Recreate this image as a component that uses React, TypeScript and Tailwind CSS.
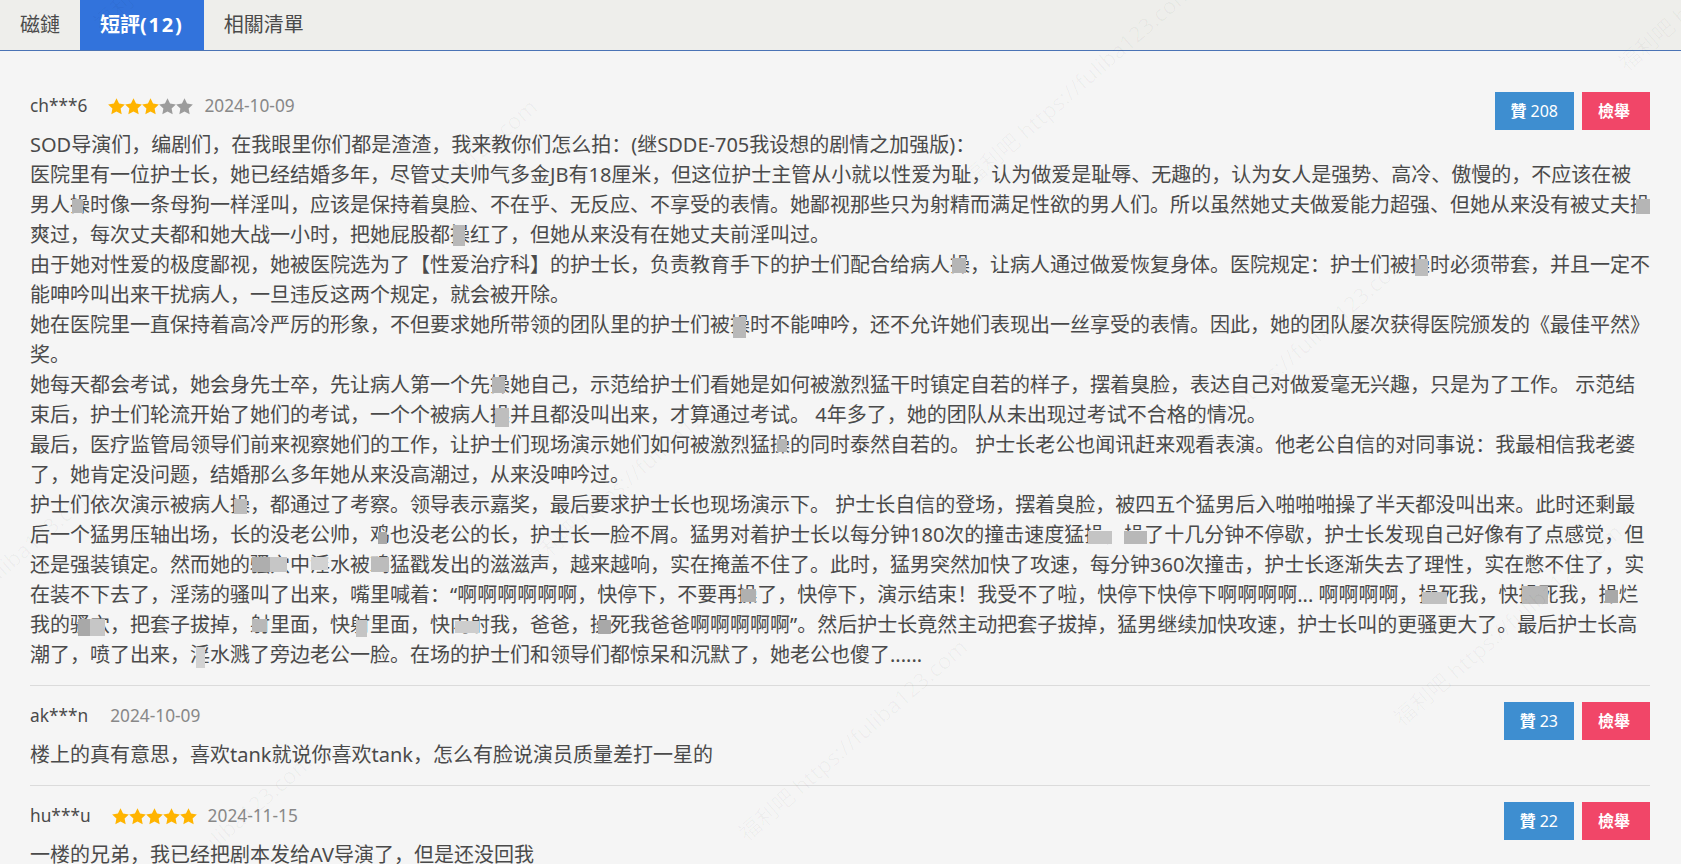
import type { ReactNode } from "react";

// lower-left corner of each watermark
const marks = [
  { x: 106, y: 37 },
  { x: 321, y: 307 },
  { x: 536, y: 577 },
  { x: 751, y: 847 },
  { x: 761, y: -78 },
  { x: 976, y: 192 },
  { x: 1191, y: 462 },
  { x: 1406, y: 732 },
  { x: 1631, y: 77 },
  { x: -119, y: 692 },
  { x: 96, y: 962 },
];

const Mask = ({ children, cls }: { children: ReactNode; cls: string }) => (
  <span className="relative">
    {children}
    <span className={`absolute ${cls}`} />
  </span>
);

const Star = ({ on }: { on: boolean }) => (
  <svg viewBox="0 0 24 24" className={`h-[17px] w-[17px] ${on ? "fill-[#ffb400]" : "fill-[#9c9c9c]"}`}>
    <path d="M12 .5l3.6 7.4 8.2 1.1-6 5.7 1.5 8.1-7.3-3.9-7.3 3.9 1.5-8.1-6-5.7 8.2-1.1z" />
  </svg>
);

const Review = ({
  name,
  date,
  stars,
  likes,
  children,
  last,
}: {
  name: string;
  date: string;
  stars?: number;
  likes: number;
  children: ReactNode;
  last?: boolean;
}) => (
  <div className={`pt-4 pb-[15px] ${last ? "" : "border-b border-[#dbdbdb]"}`}>
    <div className="flex h-[38px] justify-between">
      <div className="flex h-7 items-center text-[17.3px]">
        <span>{name}</span>
        {stars !== undefined && (
          <span className="ml-[21px] flex">
            {[1, 2, 3, 4, 5].map((n) => (
              <Star key={n} on={n <= stars} />
            ))}
          </span>
        )}
        <span className={`text-[#888888] ${stars !== undefined ? "ml-[11px]" : "ml-[22px]"}`}>{date}</span>
      </div>
      <div className="flex gap-2 text-[16px] text-white">
        <button className="flex h-[38px] items-center bg-[#3e8ed0] px-4">
          <b>贊</b>
          <span className="ml-1">{likes}</span>
        </button>
        <button className="h-[38px] bg-[#f14668] pr-5 pl-4 font-bold">檢舉</button>
      </div>
    </div>
    <div className="text-[20px] leading-[30px]">{children}</div>
  </div>
);

export default function App() {
  return (
    <div className="relative h-[864px] overflow-hidden bg-[#f5f5f5] font-['Noto_Sans','Noto_Sans_CJK_SC',sans-serif] text-[#4a4a4a]">
      <div className="flex h-[51px] border-b border-[#4a73b5] bg-[#eeeeeb] text-[20px] leading-[50px]">
        <div className="px-5">磁鏈</div>
        <div className="bg-[#3273dc] px-5 font-bold text-white">
          短評<span className="tracking-[1.8px]">(12)</span>
        </div>
        <div className="px-5">相關清單</div>
      </div>

      <div className="pt-[25px] pr-[31px] pl-[30px]">
        <Review name="ch***6" date="2024-10-09" stars={3} likes={208}>
          <p>SOD导演们，编剧们，在我眼里你们都是渣渣，我来教你们怎么拍：(继SDDE-705我设想的剧情之加强版)：</p>
          <p>
            医院里有一位护士长，她已经结婚多年，尽管丈夫帅气多金JB有18厘米，但这位护士主管从小就以性爱为耻，认为做爱是耻辱、无趣的，认为女人是强势、高冷、傲慢的，不应该在被男人
            <Mask cls="top-[8px] left-[2px] h-[14px] w-[11px] bg-[#b5b5b5]">操</Mask>时像一条母狗一样淫叫，应该是保持着臭脸、不在乎、无反应、不享受的表情。她鄙视那些只为射精而满足性欲的男人们。所以虽然她丈夫做爱能力超强、但她从来没有被丈夫
            <Mask cls="top-[8px] left-[6px] h-[15px] w-[14px] bg-[#b5b5b5]">操</Mask>爽过，每次丈夫都和她大战一小时，把她屁股都
            <Mask cls="top-[4px] left-[3px] h-[21px] w-[12px] bg-[#b8b8b8]">操</Mask>红了，但她从来没有在她丈夫前淫叫过。
          </p>
          <p>
            由于她对性爱的极度鄙视，她被医院选为了【性爱治疗科】的护士长，负责教育手下的护士们配合给病人
            <Mask cls="top-[7px] left-[2px] h-[15px] w-[14px] bg-[#b5b5b5]">操</Mask>，让病人通过做爱恢复身体。医院规定：护士们被
            <Mask cls="top-[8px] left-[5px] h-[17px] w-[13px] bg-[#bcbcbc]">操</Mask>时必须带套，并且一定不能呻吟叫出来干扰病人，一旦违反这两个规定，就会被开除。
          </p>
          <p>
            她在医院里一直保持着高冷严厉的形象，不但要求她所带领的团队里的护士们被
            <Mask cls="top-[6px] left-[3px] h-[21px] w-[13px] bg-[#b8b8b8]">操</Mask>时不能呻吟，还不允许她们表现出一丝享受的表情。因此，她的团队屡次获得医院颁发的《最佳平然》奖。
          </p>
          <p>
            她每天都会考试，她会身先士卒，先让病人第一个先
            <Mask cls="top-[6px] left-[2px] h-[16px] w-[13px] bg-[#b5b5b5]">操</Mask>她自己，示范给护士们看她是如何被激烈猛干时镇定自若的样子，摆着臭脸，表达自己对做爱毫无兴趣，只是为了工作。 示范结束后，护士们轮流开始了她们的考试，一个个被病人
            <Mask cls="top-[7px] left-[5px] h-[19px] w-[14px] bg-[#bebebe]">操</Mask>并且都没叫出来，才算通过考试。 4年多了，她的团队从未出现过考试不合格的情况。
          </p>
          <p>
            最后，医疗监管局领导们前来视察她们的工作，让护士们现场演示她们如何被激烈猛
            <Mask cls="top-[8px] left-[7px] h-[13px] w-[10px] bg-[#b5b5b5]">操</Mask>的同时泰然自若的。 护士长老公也闻讯赶来观看表演。他老公自信的对同事说：我最相信我老婆了，她肯定没问题，结婚那么多年她从来没高潮过，从来没呻吟过。
          </p>
          <p>
            护士们依次演示被病人
            <Mask cls="top-[8px] left-[4px] h-[15px] w-[13px] bg-[#bcbcbc]">操</Mask>，都通过了考察。领导表示嘉奖，最后要求护士长也现场演示下。 护士长自信的登场，摆着臭脸，被四五个猛男后入啪啪啪操了半天都没叫出来。此时还剩最后一个猛男压轴出场，长的没老公帅，
            <Mask cls="top-[11px] left-[8px] h-[12px] w-[9px] bg-[#a8a8a8]">鸡</Mask>也没老公的长，护士长一脸不屑。猛男对着护士长以每分钟180次的撞击速度猛
            <Mask cls="top-[10px] left-[4px] h-[13px] w-[24px] bg-[#c4c4c4]">操</Mask>，
            <Mask cls="top-[10px] left-0 h-[13px] w-[23px] bg-[#b8b8b8]">操</Mask>了十几分钟不停歇，护士长发现自己好像有了点感觉，但还是强装镇定。然而她的
            <Mask cls="top-[6px] left-[2px] h-[15px] w-[18px] bg-[#aeaeae]">骚</Mask>
            <Mask cls="top-[6px] left-0 h-[15px] w-[17px] bg-[#c6c6c6]">穴</Mask>中
            <Mask cls="top-[6px] left-[1px] h-[13px] w-[17px] bg-[#d2d2d2]">淫</Mask>水被
            <Mask cls="top-[6px] left-[1px] h-[15px] w-[18px] bg-[#bcbcbc]">鸡</Mask>猛戳发出的滋滋声，越来越响，实在掩盖不住了。此时，猛男突然加快了攻速，每分钟360次撞击，护士长逐渐失去了理性，实在憋不住了，实在装不下去了，淫荡的骚叫了出来，嘴里喊着：“啊啊啊啊啊啊，快停下，不要再
            <Mask cls="top-[8px] left-[4px] h-[13px] w-[15px] bg-[#b0b0b0]">操</Mask>了，快停下，演示结束！我受不了啦，快停下快停下啊啊啊啊... 啊啊啊啊，
            <Mask cls="top-[11px] left-[4px] h-[12px] w-[25px] bg-[#c0c0c0]">操</Mask>死我，快
            <Mask cls="top-[5px] left-[4px] h-[18px] w-[26px] bg-[#b8b8b8]">操</Mask>死我，
            <Mask cls="top-[9px] left-[7px] h-[13px] w-[13px] bg-[#a8a8a8]">操</Mask>烂我的
            <Mask cls="top-[8px] left-[8px] h-[17px] w-[12px] bg-[#a8a8a8]">骚</Mask>
            <Mask cls="top-[8px] left-0 h-[17px] w-[15px] bg-[#c6c6c6]">穴</Mask>，把套子拔掉，
            <Mask cls="top-[8px] left-[2px] h-[13px] w-[15px] bg-[#b8b8b8]">射</Mask>里面，快
            <Mask cls="top-[9px] left-[6px] h-[17px] w-[11px] bg-[#c4c4c4]">射</Mask>里面，快
            <Mask cls="top-[10px] left-[5px] h-[12px] w-[24px] bg-[#cdcdcd]">内</Mask>射我，爸爸，
            <Mask cls="top-[9px] left-[8px] h-[14px] w-[13px] bg-[#a8a8a8]">操</Mask>死我爸爸啊啊啊啊啊”。然后护士长竟然主动把套子拔掉，猛男继续加快攻速，护士长叫的更骚更大了。最后护士长高潮了，喷了出来，
            <Mask cls="top-[6px] left-[6px] h-[21px] w-[9px] bg-[#d2d2d2]">淫</Mask>水溅了旁边老公一脸。在场的护士们和领导们都惊呆和沉默了，她老公也傻了......
          </p>
        </Review>
        <Review name="ak***n" date="2024-10-09" likes={23}>
          <p>楼上的真有意思，喜欢tank就说你喜欢tank，怎么有脸说演员质量差打一星的</p>
        </Review>
        <Review name="hu***u" date="2024-11-15" stars={5} likes={22} last>
          <p>一楼的兄弟，我已经把剧本发给AV导演了，但是还没回我</p>
        </Review>
      </div>

      <div className="pointer-events-none absolute inset-0 overflow-hidden">
        {marks.map((m) => (
          <span
            key={m.x}
            className="absolute origin-bottom-left rotate-[-41deg] text-[22px] leading-[30px] whitespace-nowrap text-black/[0.03]"
            style={{ left: m.x, top: m.y - 30 }}
          >
            福利吧 https://fuliba123.com
          </span>
        ))}
      </div>
    </div>
  );
}
